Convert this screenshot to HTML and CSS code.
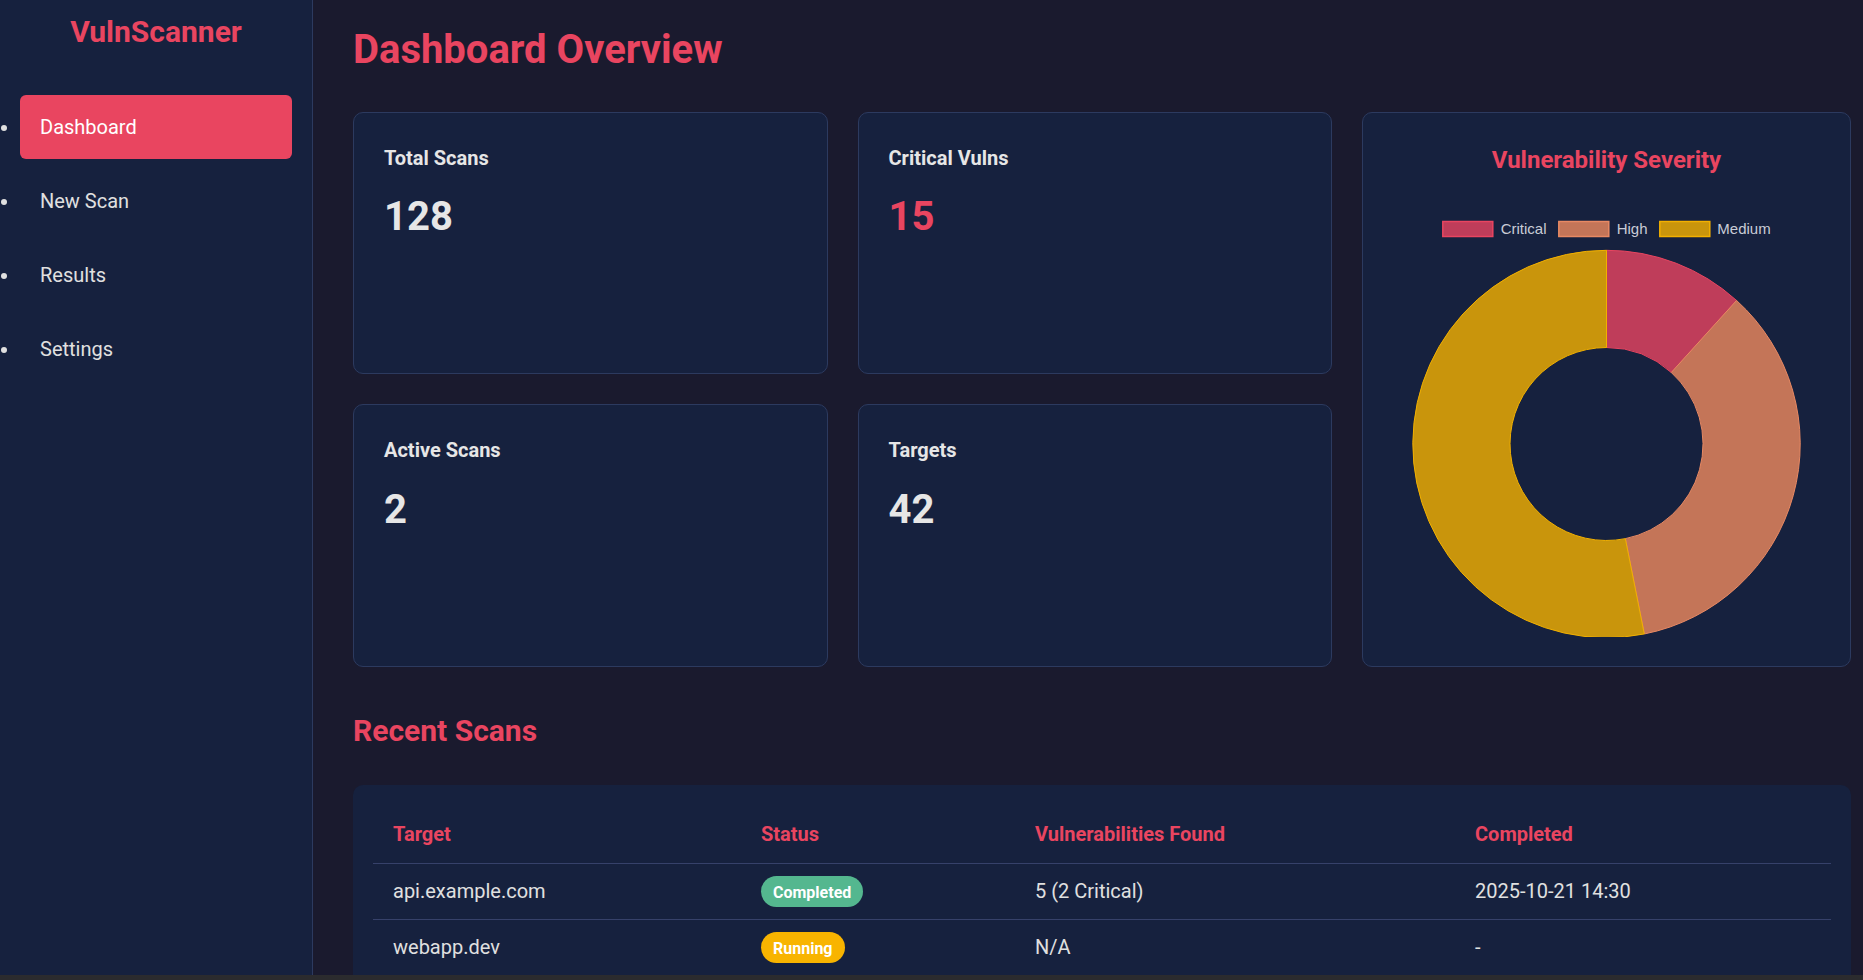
FILE: index.html
```html
<!DOCTYPE html>
<html lang="en">
<head>
<meta charset="utf-8">
<title>VulnScanner Dashboard</title>
<link rel="stylesheet" href="styles.css">
</head>
<body>
<div class="app">
  <aside class="sidebar">
    <h2 class="brand">VulnScanner</h2>
    <ul class="nav">
      <li><a class="nav-link active" href="#">Dashboard</a></li>
      <li><a class="nav-link" href="#">New Scan</a></li>
      <li><a class="nav-link" href="#">Results</a></li>
      <li><a class="nav-link" href="#">Settings</a></li>
    </ul>
  </aside>
  <main class="main">
    <h1 class="page-title">Dashboard Overview</h1>
    <section class="grid">
      <div class="card stat">
        <h3 class="stat-label">Total Scans</h3>
        <p class="stat-value">128</p>
      </div>
      <div class="card stat">
        <h3 class="stat-label">Critical Vulns</h3>
        <p class="stat-value critical">15</p>
      </div>
      <div class="card chart-card">
        <h3 class="chart-title">Vulnerability Severity</h3>
        <svg class="chart" width="427" height="436" viewBox="0 0 427 436">
          <rect x="49.8" y="20.5" width="50" height="15" fill="#bf3d5a" stroke="#e94560" stroke-width="1.5"/>
          <text class="legend-text" x="107.7" y="33">Critical</text>
          <rect x="165.8" y="20.5" width="50" height="15" fill="#c47558" stroke="#e88963" stroke-width="1.5"/>
          <text class="legend-text" x="223.7" y="33">High</text>
          <rect x="266.8" y="20.5" width="50" height="15" fill="#c9950c" stroke="#f2b000" stroke-width="1.5"/>
          <text class="legend-text" x="324.3" y="33">Medium</text>
          <path d="M 213.5 49.3 A 193.7 193.7 0 0 1 343.58 99.47 L 278.31 171.49 A 96.5 96.5 0 0 0 213.5 146.5 Z" fill="#bf3d5a" stroke="#e94560" stroke-width="1"/>
          <path d="M 343.58 99.47 A 193.7 193.7 0 0 1 251.29 432.98 L 232.33 337.65 A 96.5 96.5 0 0 0 278.31 171.49 Z" fill="#c47558" stroke="#e88963" stroke-width="1"/>
          <path d="M 251.29 432.98 A 193.7 193.7 0 1 1 213.5 49.3 L 213.5 146.5 A 96.5 96.5 0 1 0 232.33 337.65 Z" fill="#c9950c" stroke="#f2b000" stroke-width="1"/>
        </svg>
      </div>
      <div class="card stat">
        <h3 class="stat-label">Active Scans</h3>
        <p class="stat-value">2</p>
      </div>
      <div class="card stat">
        <h3 class="stat-label">Targets</h3>
        <p class="stat-value">42</p>
      </div>
    </section>
    <h2 class="section-title">Recent Scans</h2>
    <div class="table-card">
      <table class="scans">
        <thead>
          <tr>
            <th class="col-target">Target</th>
            <th class="col-status">Status</th>
            <th class="col-vulns">Vulnerabilities Found</th>
            <th class="col-done">Completed</th>
          </tr>
        </thead>
        <tbody>
          <tr>
            <td>api.example.com</td>
            <td><span class="badge completed">Completed</span></td>
            <td>5 (2 Critical)</td>
            <td>2025-10-21 14:30</td>
          </tr>
          <tr>
            <td>webapp.dev</td>
            <td><span class="badge running">Running</span></td>
            <td>N/A</td>
            <td>-</td>
          </tr>
        </tbody>
      </table>
    </div>
  </main>
</div>
</body>
</html>
```

FILE: styles.css
```css
* { box-sizing: border-box; }

html, body {
  margin: 0;
  padding: 0;
  background: #1a1a2e;
  font-family: Roboto, "Noto Sans", "Liberation Sans", sans-serif;
  color: #e0e0e0;
}

body {
  height: 980px;
  overflow: hidden;
}

.app {
  display: flex;
  height: 980px;
  border-bottom: 5px solid #2b2b2e;
  overflow: hidden;
}

.sidebar {
  width: 313px;
  flex-shrink: 0;
  background: #16213e;
  border-right: 1px solid #2c3a5f;
  padding: 14px 20px;
}

.brand {
  margin: 0 0 46px;
  text-align: center;
  color: #e94560;
  font-size: 30px;
  font-weight: 700;
  line-height: 35px;
}

.nav {
  margin: 0;
  padding: 0;
  color: #e0e0e0;
  font-size: 20px;
}

.nav li {
  margin-bottom: 10px;
}

.nav-link {
  display: block;
  padding: 20px 20px;
  border-radius: 6px;
  color: #e0e0e0;
  text-decoration: none;
  line-height: 24px;
}

.nav-link.active {
  background: #e94560;
  color: #ffffff;
}

.main {
  flex: 1;
  min-width: 0;
  padding: 27px 12px 0 40px;
  overflow: hidden;
}

.page-title {
  margin: 0 0 38px;
  color: #e94560;
  font-size: 40px;
  font-weight: 700;
  line-height: 1.172;
}

.grid {
  display: grid;
  grid-template-columns: 1fr 1fr 489px;
  grid-template-rows: 1fr 1fr;
  gap: 30px;
}

.card {
  background: #16213e;
  border: 1px solid #2c3a5f;
  border-radius: 10px;
}

.stat {
  padding: 30px;
}

.stat-label {
  margin: 4px 0 24px;
  font-size: 20px;
  font-weight: 700;
  line-height: 1.172;
  color: #e6e6e6;
}

.stat-value {
  margin: 0;
  font-size: 40px;
  font-weight: 700;
  line-height: 1.172;
  color: #e6e6e6;
}

.stat-value.critical {
  color: #e94560;
}

.chart-card {
  grid-column: 3;
  grid-row: 1 / span 2;
  padding: 30px 30px 29px;
}

.chart-title {
  margin: 3px 0 27px;
  text-align: center;
  color: #e94560;
  font-size: 24px;
  font-weight: 700;
  line-height: 1.172;
}

.chart {
  display: block;
  margin: 0 auto;
}

.legend-text {
  font-family: "Liberation Sans", Arial, sans-serif;
  font-size: 15px;
  fill: #c9ccd6;
}

.section-title {
  margin: 46px 0 37px;
  color: #e94560;
  font-size: 30px;
  font-weight: 700;
  line-height: 1.172;
}

.table-card {
  background: #16213e;
  border-radius: 10px;
  padding: 22px 20px 20px;
}

.scans {
  width: 100%;
  border-collapse: collapse;
  font-size: 20px;
  table-layout: fixed;
}

.scans th,
.scans td {
  padding: 16px 20px;
  text-align: left;
  line-height: 1.172;
  border-bottom: 1px solid #36416a;
}

.scans th {
  color: #e94560;
  font-weight: 700;
}

.scans td {
  color: #e0e0e0;
}

.col-target { width: 368px; }
.col-status { width: 274px; }
.col-vulns { width: 440px; }
.col-done { width: 376px; }

.badge {
  padding: 7px 12px 5px;
  border-radius: 16px;
  font-size: 16px;
  font-weight: 700;
  color: #ffffff;
}

.badge.completed { background: #54b78f; }
.badge.running { background: #f8b400; }
```
